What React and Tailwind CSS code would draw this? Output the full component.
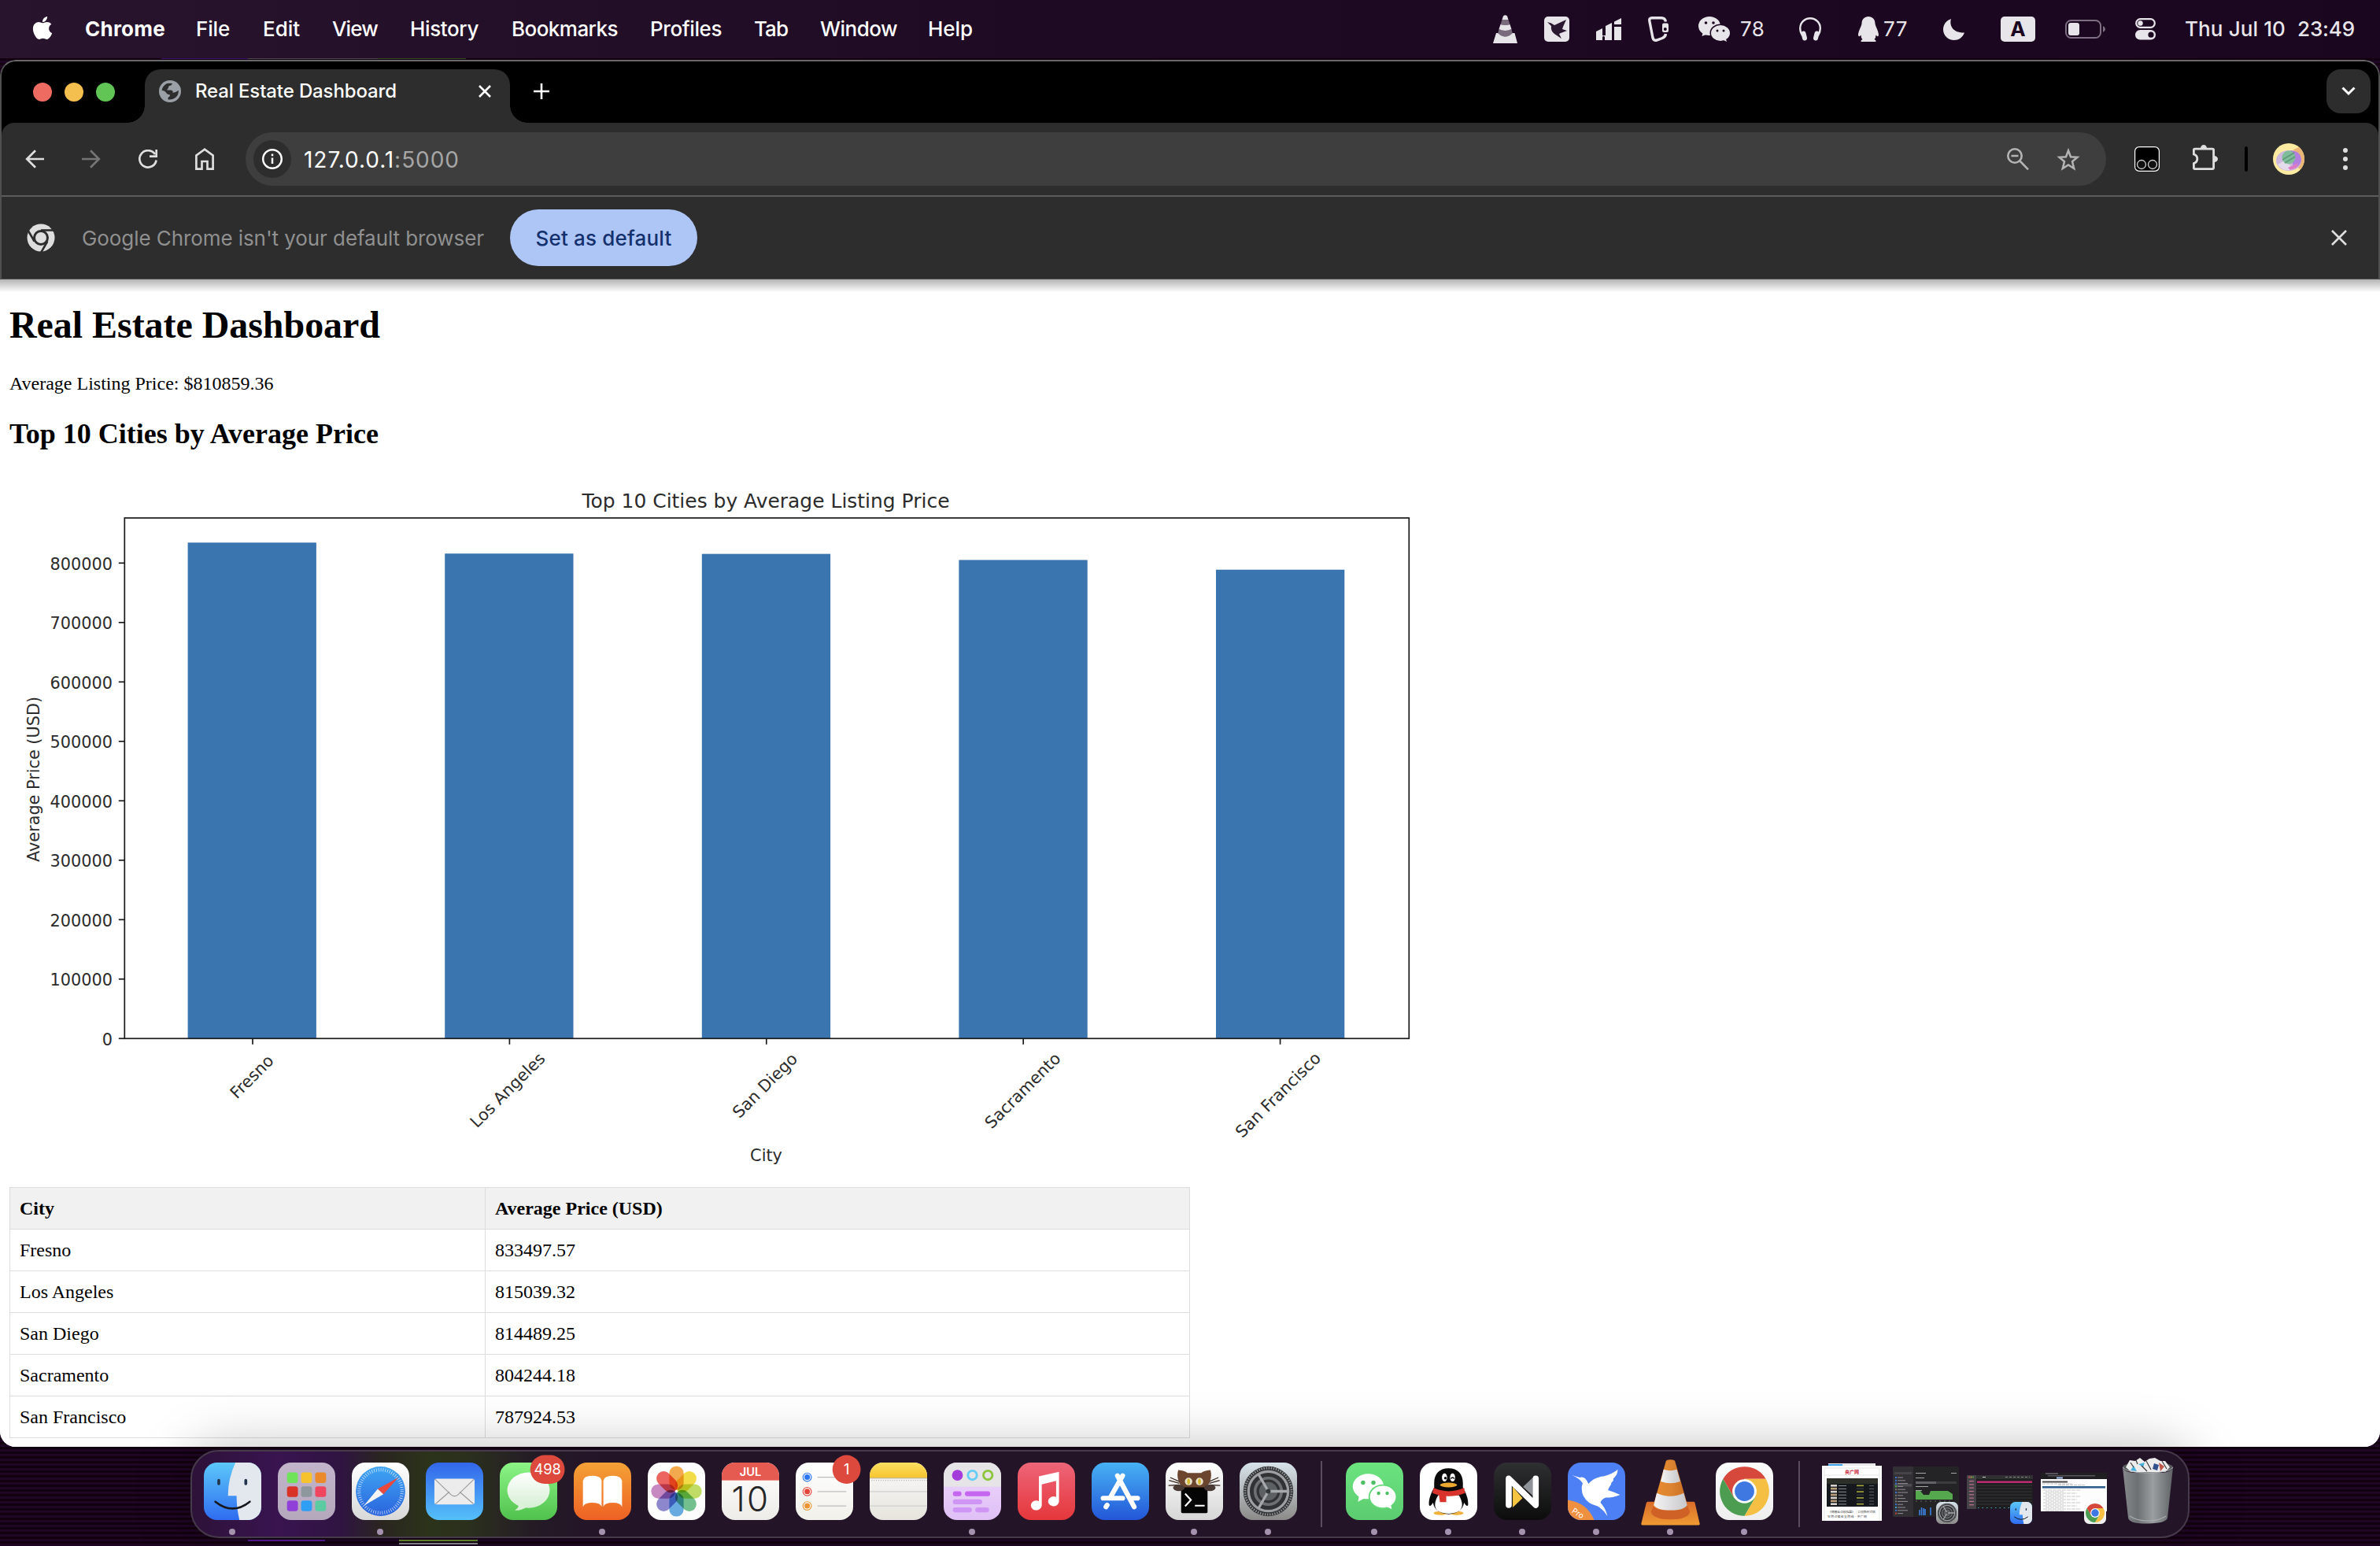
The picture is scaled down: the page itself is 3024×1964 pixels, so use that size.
import React, { useLayoutEffect, useRef } from "react";
import { FaApple } from "react-icons/fa";

/* One line of text whose tracking is adjusted so that it fills `w` pixels. */
function Fit({ w, className = "", children }) {
  const ref = useRef(null);
  useLayoutEffect(() => {
    const el = ref.current;
    el.style.letterSpacing = "0px";
    const n = el.textContent.length;
    const natural = el.getBoundingClientRect().width;
    el.style.letterSpacing = `${(w - natural) / n}px`;
  }, [w]);
  return (
    <span ref={ref} className={`inline-block shrink-0 whitespace-pre ${className}`}>
      {children}
    </span>
  );
}

/* ---------- menu bar ---------- */

const MENUS = [
  { label: "File", w: 43, ml: "ml-[39px]" },
  { label: "Edit", w: 47, ml: "ml-[42px]" },
  { label: "View", w: 58, ml: "ml-[41px]" },
  { label: "History", w: 87, ml: "ml-[41px]" },
  { label: "Bookmarks", w: 135, ml: "ml-[42px]" },
  { label: "Profiles", w: 91, ml: "ml-[41px]" },
  { label: "Tab", w: 43, ml: "ml-[41px]" },
  { label: "Window", w: 98, ml: "ml-[41px]" },
  { label: "Help", w: 57, ml: "ml-[39px]" },
];

function MenuBar() {
  return (
    <header className="flex h-[74px] w-full items-center bg-gradient-to-r from-[#28142d] via-[#1f0a24] via-45% to-[#1b0620] text-[26px] font-medium leading-none text-white">
      <FaApple className="mb-[4px] ml-[39px] h-[33px] w-[30px] shrink-0" />
      <Fit w={102} className="ml-[39px] font-bold">Chrome</Fit>
      {MENUS.map((m) => (
        <Fit key={m.label} w={m.w} className={m.ml}>{m.label}</Fit>
      ))}
      <div className="ml-auto flex h-full items-center pr-[32px] text-[#e8e5ea]">
        <svg width="31" height="36" viewBox="0 0 31 36" fill="currentColor">
          <path d="M13 1.5Q15.500-1 18 1.500L19.500 6H11.500Z" />
          <path d="M11.500 6H19.500L21.500 12Q15.500 14 9.500 12Z" opacity=".45" />
          <path d="M9.500 12Q15.500 14 21.500 12L23.500 18Q15.500 22 7.500 18Z" />
          <path d="M7.500 18Q15.500 22 23.500 18L25 24Q15.500 31 6 24Z" opacity=".45" />
          <path d="M4 23H6Q15.500 32 25 23H27.500L31 36H0Z" />
        </svg>
        <svg className="ml-[34px]" width="32" height="32" viewBox="0 0 32 32">
          <rect width="32" height="32" rx="5" fill="currentColor" />
          <path d="M4 7L9 8.500L13 11L28 4L24 13L23 16L29 18L21 21L19 22L22 28L13 22Q8 18 9 12Z" fill="#2a1730" />
        </svg>
        <svg className="ml-[34px]" width="32" height="28" viewBox="0 0 32 28" fill="currentColor">
          <path d="M0 17L8 13V22H12V10L20 6V28H11V24Q9.500 21 8 24V28H0Z" />
          <path d="M23 4.500L32 0V8H23ZM23 11H32V28H23Z" />
        </svg>
        <svg className="ml-[34px]" width="27" height="32" viewBox="0 0 27 32" fill="none" stroke="currentColor" strokeWidth="3.400">
          <path d="M22.500 6.500Q21.500 1.700 17 1.700H5Q1 1.700 1.900 6L6 27Q7 31 11 30L18 27.500Q22 26 22.500 22" />
          <rect x="18" y="8.500" width="8" height="11.500" rx="2" fill="currentColor" stroke="none" />
          <circle cx="21.800" cy="16" r="2" fill="#1b0620" stroke="none" />
        </svg>
        <svg className="ml-[37px]" width="40" height="32" viewBox="0 0 40 32">
          <g fill="currentColor">
            <ellipse cx="14" cy="12" rx="14" ry="12" />
            <path d="M6 19L4.500 25L12 22Z" />
            <ellipse cx="28" cy="21" rx="13.500" ry="11.500" fill="#1b0620" />
            <ellipse cx="28" cy="21" rx="12" ry="10" />
            <path d="M30 29L36 32L34.500 27Z" />
          </g>
          <g fill="#1b0620">
            <circle cx="9.500" cy="8" r="1.800" /><circle cx="19" cy="8" r="1.800" />
            <circle cx="24" cy="18" r="1.500" /><circle cx="32" cy="18" r="1.500" />
          </g>
        </svg>
        <Fit w={31} className="ml-[13px] font-normal">78</Fit>
        <svg className="ml-[44px]" width="28" height="30" viewBox="0 0 28 30" fill="none" stroke="currentColor">
          <path d="M4 23Q1.200 19 1.200 14A12.800 12.800 0 0 1 26.800 14Q26.800 19 24 23" strokeWidth="2.400" />
          <path d="M5.500 20.500L7 26.500M22.500 20.500L21 26.500" strokeWidth="6" strokeLinecap="round" />
        </svg>
        <svg className="ml-[47px]" width="26" height="32" viewBox="0 0 26 32" fill="currentColor">
          <path d="M13 0C18 0 21.500 3.500 21.500 9C22 13 26 18 26 24Q25 26.500 22.500 23.500Q22.500 27 20.500 29Q23 30 22.500 32H3.500Q3 30 5.500 29Q3.500 27 3.500 23.500Q1 26.500 0 24C0 18 4 13 4.500 9C4.500 3.500 8 0 13 0Z" />
        </svg>
        <Fit w={31} className="ml-[6px] font-normal">77</Fit>
        <svg className="ml-[45px]" width="27" height="27" viewBox="0 0 27 27" fill="currentColor">
          <path d="M10 0C7.500 8 12 18 27 17.500C24.500 24 19.500 27 14 27C6 27 0 21 0 13.500C0 7 4 2 10 0Z" />
        </svg>
        <span className="ml-[46px] flex h-[32px] w-[44px] items-center justify-center rounded-[5px] bg-[#e8e5ea] text-[26px] font-bold leading-none text-[#1b0620]">A</span>
        <svg className="ml-[38px]" width="51" height="24" viewBox="0 0 51 24">
          <rect x="1" y="1" width="44" height="22" rx="6.500" fill="none" stroke="#7d6f81" strokeWidth="2" />
          <rect x="4" y="4" width="14" height="16" rx="3" fill="currentColor" />
          <path d="M48 8Q51 9.500 51 12T48 16Z" fill="#7d6f81" />
        </svg>
        <svg className="ml-[38px]" width="26" height="28" viewBox="0 0 26 28">
          <rect x="1.200" y="1.200" width="23.600" height="10.600" rx="5.300" fill="none" stroke="currentColor" strokeWidth="2.200" />
          <circle cx="6.500" cy="6.500" r="3.200" fill="currentColor" />
          <rect x="0" y="15" width="26" height="12.500" rx="6.250" fill="currentColor" />
          <circle cx="20" cy="21.200" r="3.600" fill="#1b0620" />
        </svg>
        <Fit w={128} className="ml-[37px]">Thu Jul 10</Fit>
        <Fit w={73} className="ml-[15px]">23:49</Fit>
      </div>
    </header>
  );
}

/* ---------- browser chrome ---------- */

function TabStrip() {
  return (
    <div className="flex h-[78px] items-end">
      <div className="mb-[27px] ml-[40px] flex gap-4">
        <span className="size-6 rounded-full bg-[#ed6b60]" />
        <span className="size-6 rounded-full bg-[#f5bf4f]" />
        <span className="size-6 rounded-full bg-[#61c555]" />
      </div>
      <span className="ml-[16px] size-[22px] bg-[radial-gradient(circle_at_0_0,transparent_21.500px,#2d2d2d_22px)]" />
      <div className="h-[68px] w-[464px] rounded-t-[20px] bg-[#2d2d2d]">
        <div className="flex h-[56px] items-center pl-[18px] pr-[24px]">
          <svg width="28" height="28" viewBox="0 0 28 28">
            <circle cx="14" cy="14" r="14" fill="#9aa0a6" />
            <path d="M3.500 13Q4.500 7 10 4Q14.500 3.500 17 4Q16 7 13 7Q11.500 8.500 12 10Q10 10.500 10.500 12.500H15Q18.500 13 17.500 16Q23 14.500 24.700 12.500Q25.500 18 21 22Q17 25 12 24.500Q10.500 23.500 12 21.500Q14.500 20.500 14 18.500Q10 18 8.500 15Q6.500 12.500 3.500 13Z" fill="#2d2d2d" />
            <path d="M17 3.800Q23 6 24.600 12Q21.500 15.500 18 14.500Q18.500 12 15 10.500Q13.500 8 17 7.500Z" fill="#9aa0a6" />
          </svg>
          <Fit w={256} className="ml-[18px] text-[24px] font-medium leading-none text-white">Real Estate Dashboard</Fit>
          <svg className="ml-auto" width="16" height="16" viewBox="0 0 16 16" stroke="#fff" strokeWidth="2.600">
            <path d="M1 1L15 15M15 1L1 15" />
          </svg>
        </div>
      </div>
      <span className="size-[22px] bg-[radial-gradient(circle_at_100%_0,transparent_21.500px,#2d2d2d_22px)]" />
      <svg className="mb-[30px] ml-[8px]" width="20" height="20" viewBox="0 0 20 20" stroke="#fff" strokeWidth="2.600">
        <path d="M10 0V20M0 10H20" />
      </svg>
      <div className="mb-[12px] ml-auto mr-[10px] flex size-14 items-center justify-center rounded-[18px] bg-[#2d2d2d]">
        <svg width="18" height="12" viewBox="0 0 18 12" fill="none" stroke="#fff" strokeWidth="3">
          <path d="M1.500 1.500L9 9L16.500 1.500" />
        </svg>
      </div>
    </div>
  );
}

function Toolbar() {
  return (
    <div className="flex h-[92px] items-center rounded-t-[16px] bg-[#2d2d2d] pl-[30px] text-[#dedede]">
      <svg width="24" height="24" viewBox="0 0 24 24" fill="none" stroke="currentColor" strokeWidth="2.700">
        <path d="M24 12H2.500M13 1.200L2.200 12L13 22.800" />
      </svg>
      <svg className="ml-[48px] text-[#757575]" width="24" height="24" viewBox="0 0 24 24" fill="none" stroke="currentColor" strokeWidth="2.700">
        <path d="M0 12H21.500M11 1.200L21.800 12L11 22.800" />
      </svg>
      <svg className="ml-[48px]" width="24" height="24" viewBox="0 0 24 24" fill="none" stroke="currentColor" strokeWidth="2.700">
        <path d="M22.600 13.500A10.700 10.700 0 1 1 21 6" />
        <path d="M22.700 0V8.700H14" />
      </svg>
      <svg className="ml-[48px]" width="24" height="28" viewBox="0 0 24 28" fill="none" stroke="currentColor" strokeWidth="2.700">
        <path d="M1.400 26.600V9.500L12 1.700L22.600 9.500V26.600H15.500V17H8.500V26.600Z" />
      </svg>
      <div className="ml-[40px] flex h-[68px] w-[2364px] shrink-0 items-center rounded-full bg-[#3e3e3e] pl-[10px] pr-[33px]">
        <span className="flex size-12 items-center justify-center rounded-full bg-[#2d2d2d]">
          <svg width="26" height="26" viewBox="0 0 26 26" fill="none" stroke="#fff">
            <circle cx="13" cy="13" r="11.800" strokeWidth="2.400" />
            <path d="M13 11.500V19M13 6.500V9.200" strokeWidth="2.500" />
          </svg>
        </span>
        <Fit w={198} className="ml-[16px] mt-[1px] text-[28px] leading-none text-white">
          127.0.0.1<span className="text-[#a6a6a6]">:5000</span>
        </Fit>
        <svg className="ml-auto text-[#b4b4b4]" width="28" height="28" viewBox="0 0 28 28" fill="none" stroke="currentColor" strokeWidth="2.600">
          <circle cx="10" cy="10" r="8.700" />
          <path d="M5.500 10H14.500M16 16L27 27.300" />
        </svg>
        <svg className="ml-[35px] text-[#b4b4b4]" width="30" height="29" viewBox="0 0 30 29" fill="none" stroke="currentColor" strokeWidth="2.500">
          <path d="M15 3.300L18 11.200L26.500 11.800L20 17.300L22.200 26L15 21.400L7.800 26L10 17.300L3.500 11.800L12 11.200Z" />
        </svg>
      </div>
      <svg className="ml-[36px] shrink-0" width="32" height="32" viewBox="0 0 32 32">
        <rect x=".6" y=".6" width="30.800" height="30.800" rx="5.500" fill="#000" stroke="#fff" strokeWidth="1.200" />
        <circle cx="9" cy="23" r="5.500" fill="#111" stroke="#d0d0d0" strokeWidth="1.300" />
        <circle cx="23" cy="23" r="5.500" fill="#111" stroke="#d0d0d0" strokeWidth="1.300" />
      </svg>
      <svg className="mb-[4px] ml-[42px] shrink-0" width="32" height="32" viewBox="0 0 32 32" fill="none" stroke="currentColor" strokeWidth="2.800">
        <path d="M1.400 12V6.500Q1.400 5.200 2.700 5.200H25Q26.600 5.200 26.600 6.500V29Q26.600 30.600 25 30.600H2.700Q1.400 30.600 1.400 29V23.500Q5.800 22 5.800 17.700T1.400 12Z" />
        <path d="M10 4.500A4 4.500 0 0 1 18 4.500ZM27.500 14A4.500 4 0 0 1 27.500 22Z" fill="currentColor" stroke="none" />
      </svg>
      <span className="ml-[34px] h-[32px] w-[4px] shrink-0 rounded-full bg-black" />
      <svg className="ml-[32px] shrink-0" width="40" height="40" viewBox="0 0 40 40">
        <clipPath id="avatar"><circle cx="20" cy="20" r="20" /></clipPath>
        <g clipPath="url(#avatar)">
          <rect width="40" height="40" fill="#fbeaa0" />
          <path d="M26 8L40 2V36L30 30Z" fill="#eab676" />
          <ellipse cx="20" cy="22" rx="16" ry="13" fill="#cdb8df" />
          <path d="M22 9Q36 10 36 22Q34 30 26 32Z" fill="#b07fe0" />
          <path d="M6 27L18 20L24 34Q12 36 6 27Z" fill="#e4dcea" />
          <path d="M19 31L32 25L30 31L22 34Z" fill="#dd7cc4" />
          <circle cx="20" cy="18" r="8.500" fill="#7fbd9b" />
          <path d="M12 21L27 12M15 25L28 17" stroke="#5e9a7a" strokeWidth="1.500" />
        </g>
      </svg>
      <svg className="ml-[49px] shrink-0" width="6" height="28" viewBox="0 0 6 28" fill="currentColor">
        <circle cx="3" cy="3" r="3" /><circle cx="3" cy="14" r="3" /><circle cx="3" cy="25" r="3" />
      </svg>
    </div>
  );
}

function InfoBar() {
  return (
    <div className="flex h-[106px] items-center border-t-2 border-[#5c5c5c] bg-[#2d2d2d] pl-[32px]">
      <svg width="36" height="36" viewBox="-18 -18 36 36">
        <circle r="17.500" fill="#dedede" />
        {[0, 120, 240].map((a) => (
          <path key={a} d="M0 -9.500H17" transform={`rotate(${a})`} stroke="#2d2d2d" strokeWidth="2.600" />
        ))}
        <circle r="8.500" fill="#dedede" stroke="#2d2d2d" strokeWidth="3" />
      </svg>
      <Fit w={511} className="ml-[34px] mt-[2px] text-[26px] leading-none text-[#909090]">Google Chrome isn't your default browser</Fit>
      <button className="ml-[33px] flex h-[72px] w-[238px] items-center justify-center rounded-full bg-[#aec6f6] pt-[2px] text-[26px] font-medium leading-none text-[#14306d]">
        <Fit w={173}>Set as default</Fit>
      </button>
      <svg className="ml-auto mr-[40px]" width="20" height="20" viewBox="0 0 20 20" stroke="#dedede" strokeWidth="2.600">
        <path d="M1 1L19 19M19 1L1 19" />
      </svg>
    </div>
  );
}

/* ---------- page ---------- */

const CITIES = [
  { name: "Fresno", price: "833497.57", cx: 320, cy: 1368 },
  { name: "Los Angeles", price: "815039.32", cx: 645, cy: 1385 },
  { name: "San Diego", price: "814489.25", cx: 972, cy: 1379 },
  { name: "Sacramento", price: "804244.18", cx: 1299.500, cy: 1385.500 },
  { name: "San Francisco", price: "787924.53", cx: 1624, cy: 1391 },
];
const BASE_Y = 1319.3;
const PER_100K = 75.5;

function PriceChart() {
  return (
    <svg
      className="mt-[28px] block"
      width="1800"
      height="900"
      viewBox="12 600 1800 900"
      fontFamily="'DejaVu Sans', sans-serif"
      fill="#2b2b2b"
    >
      <text x="973" y="645" fontSize="25" textAnchor="middle" textLength="467" lengthAdjust="spacingAndGlyphs">Top 10 Cities by Average Listing Price</text>
      {CITIES.map((c, i) => {
        const h = (Number(c.price) / 100000) * PER_100K + 0.7;
        return <rect key={c.name} x={238.600 + i * 326.600} y={BASE_Y - h} width="163.300" height={h} fill="#3b75af" />;
      })}
      <g stroke="#1a1a1a" strokeWidth="1.700" fill="none">
        <rect x="158.300" y="658" width="1632" height={BASE_Y - 658} />
        {CITIES.map((c, i) => (
          <path key={c.name} d={`M${321 + i * 326.400} ${BASE_Y}v7.500`} />
        ))}
        {[0, 1, 2, 3, 4, 5, 6, 7, 8].map((n) => (
          <path key={n} d={`M158.300 ${BASE_Y - n * PER_100K}h-7.500`} />
        ))}
      </g>
      <g fontSize="20.800">
        {[0, 1, 2, 3, 4, 5, 6, 7, 8].map((n) => (
          <text key={n} x="143" y={BASE_Y - n * PER_100K + 8.300} textAnchor="end">{n * 100000}</text>
        ))}
        {CITIES.map((c) => (
          <text key={c.name} textAnchor="middle" transform={`translate(${c.cx} ${c.cy}) rotate(-45)`} y="7">{c.name}</text>
        ))}
        <text x="973.500" y="1475" textAnchor="middle">City</text>
        <text transform="translate(50 990) rotate(-90)" textAnchor="middle">Average Price (USD)</text>
      </g>
    </svg>
  );
}

function Page() {
  return (
    <main className="h-[1483px] overflow-hidden bg-white bg-gradient-to-b from-[#b4b4b4] via-white via-[1.100%] to-white px-[12px] pt-[31px] font-['Liberation_Serif',serif] text-[24px] text-black">
      <h1 className="text-[48px] font-bold leading-[54px] tracking-[-0.05px]">Real Estate Dashboard</h1>
      <p className="mt-[33px] leading-[28px]">Average Listing Price: $810859.36</p>
      <h2 className="mt-[29px] text-[36px] font-bold leading-[42px]">Top 10 Cities by Average Price</h2>
      <PriceChart />
      <table className="mt-[8px] w-[1500px] table-fixed border-collapse text-left leading-[28px]">
        <thead>
          <tr className="h-[53px] bg-[#f1f1f1]">
            <th className="w-[604px] border border-[#ddd] px-[12px] py-0">City</th>
            <th className="border border-[#ddd] px-[12px] py-0">Average Price (USD)</th>
          </tr>
        </thead>
        <tbody>
          {CITIES.map((c) => (
            <tr key={c.name} className="h-[53px]">
              <td className="border border-[#ddd] px-[12px] py-0">{c.name}</td>
              <td className="border border-[#ddd] px-[12px] py-0">{c.price}</td>
            </tr>
          ))}
        </tbody>
      </table>
    </main>
  );
}

/* ---------- dock icons, drawn on a 100 x 100 grid ---------- */

function Grad({ id, from, to, mid }) {
  return (
    <linearGradient id={id} x1="0" y1="0" x2="0" y2="1">
      <stop offset="0" stopColor={from} />
      {mid && <stop offset=".5" stopColor={mid} />}
      <stop offset="1" stopColor={to} />
    </linearGradient>
  );
}

function Tile({ id, from, to, children }) {
  return (
    <>
      <defs>
        <Grad id={id} from={from} to={to} />
        <clipPath id={`${id}-clip`}><rect width="100" height="100" rx="23" /></clipPath>
      </defs>
      <g clipPath={`url(#${id}-clip)`}>
        <rect width="100" height="100" fill={`url(#${id})`} />
        {children}
      </g>
    </>
  );
}

function Finder({ id = "finder" }) {
  return (
    <Tile id={id} from="#5cc8fa" to="#2f6cf0">
      <path d="M55 0Q42 28 42 58H57Q57 80 62 100H100V0Z" fill="#e3e7ee" />
      <path d="M26 31V37M73 31V37" stroke="#23344d" strokeWidth="5" strokeLinecap="round" />
      <path d="M20 68Q50 92 80 68" fill="none" stroke="#16181c" strokeWidth="3.500" strokeLinecap="round" />
    </Tile>
  );
}

function Launchpad() {
  const colors = ["#6fe35a", "#f6c32f", "#ea8a2b", "#d93327", "#8e979d", "#f0455f", "#9040d8", "#2f9ff5", "#5ccba2"];
  return (
    <Tile id="launchpad" from="#c2b4ca" to="#b5a8bd">
      {colors.map((c, i) => (
        <rect key={c} x={16 + (i % 3) * 24.500} y={17 + Math.floor(i / 3) * 24.500} width="19" height="18.500" rx="4.500" fill={c} />
      ))}
    </Tile>
  );
}

function Safari() {
  return (
    <Tile id="safari" from="#ffffff" to="#d8d8d8">
      <defs><Grad id="safari-face" from="#3fa6f3" to="#2a63dd" /></defs>
      <circle cx="50" cy="50" r="43" fill="url(#safari-face)" />
      <circle cx="50" cy="50" r="37.500" fill="none" stroke="#fff" strokeWidth="6" strokeDasharray="1 2.927" opacity=".8" />
      <path d="M81 26L45 46L55 55Z" fill="#e9493d" />
      <path d="M21 75L45 46L55 55Z" fill="#f4f4f4" />
    </Tile>
  );
}

function Mail() {
  return (
    <Tile id="mail" from="#3266ea" to="#55c0fa">
      <rect x="15" y="28" width="70" height="45" rx="4" fill="#ececec" />
      <path d="M17 72L41 51M83 72L59 51M16 29L44 56Q50 61 56 56L84 29" fill="none" stroke="#9b9b9b" strokeWidth="1.600" />
    </Tile>
  );
}

function Badge({ text, x, w }) {
  return (
    <g>
      <rect x={x} y="-13" width={w} height="50" rx="25" fill="#dd4a3d" />
      <text x={x + w / 2} y="21" fontSize="25" textAnchor="middle" fill="#fff" fontFamily="Inter, sans-serif">{text}</text>
    </g>
  );
}

function Messages() {
  return (
    <>
      <Tile id="messages" from="#8cf586" to="#50c14d">
        <defs><Grad id="bubble" from="#ffffff" to="#d5efd3" /></defs>
        <ellipse cx="50" cy="48" rx="37" ry="31" fill="url(#bubble)" />
        <path d="M33 71Q34 79 26 83Q38 84 47 77Z" fill="#dcf1da" />
      </Tile>
      <Badge text="498" x={53} w={60} />
    </>
  );
}

function Books() {
  return (
    <Tile id="books" from="#f4a236" to="#ee6124">
      <path d="M16 77V32Q17 23 32 23Q48 23 48.500 32V77Q46 70 32 70Q19 70 16 77ZM51.500 77V32Q52 23 68 23Q83 23 84 32V77Q81 70 68 70Q54 70 51.500 77Z" fill="#fff" />
    </Tile>
  );
}

function Photos() {
  const petals = ["#f39b2d", "#f1d928", "#b7d84b", "#5bb77c", "#4f9fe0", "#7b74c9", "#c073b8", "#ea4a44"];
  return (
    <Tile id="photos" from="#ffffff" to="#fbfbfb">
      {petals.map((c, i) => (
        <rect key={c} x="37.500" y="6" width="25" height="42" rx="12.500" fill={c} opacity=".85" transform={`rotate(${i * 45} 50 50)`} className="mix-blend-multiply" />
      ))}
      <circle cx="50" cy="50" r="2" fill="#fff" />
    </Tile>
  );
}

function Calendar() {
  return (
    <Tile id="calendar" from="#ffffff" to="#eeece8">
      <rect width="100" height="31" fill="#e55a51" />
      <text x="50" y="23.500" fontSize="20" fontWeight="600" textAnchor="middle" fill="#fff" fontFamily="Inter, sans-serif">JUL</text>
      <text x="49" y="85" fontSize="60" fontWeight="300" textAnchor="middle" textLength="64" fill="#262626" fontFamily="Inter, sans-serif">10</text>
    </Tile>
  );
}

function Reminders() {
  return (
    <>
      <Tile id="reminders" from="#ffffff" to="#f1f0ea">
        {["#2b74f2", "#e5463a", "#ef9434"].map((c, i) => (
          <g key={c}>
            <circle cx="20" cy={25.500 + i * 25} r="7.300" fill="#fff" stroke={c} strokeWidth="1.600" />
            <circle cx="20" cy={25.500 + i * 25} r="4.800" fill={c} />
            <path d={`M38 ${25.500 + i * 25}H88`} stroke="#bdbdbd" strokeWidth="1.500" />
          </g>
        ))}
      </Tile>
      <Badge text="1" x={64} w={49} />
    </>
  );
}

function Notes() {
  return (
    <Tile id="notes" from="#fafafa" to="#e6e4dc">
      <defs><Grad id="notes-top" from="#fbe062" to="#f7c52f" /></defs>
      <rect width="100" height="26" fill="url(#notes-top)" />
      <path d="M0 27H100" stroke="#b9a068" strokeWidth="1.500" />
      <path d="M3 31H100" stroke="#b8b8b8" strokeWidth="2" strokeDasharray="1.500 2.500" />
      <path d="M0 50.500H100M0 75.500H100" stroke="#cfcfcf" strokeWidth="1.500" />
    </Tile>
  );
}

function Widgets() {
  return (
    <Tile id="widgets" from="#eed8fb" to="#dfc0f6">
      <rect width="100" height="42" fill="#e6e4e6" />
      <circle cx="24" cy="22" r="9.500" fill="#a43cdb" />
      <circle cx="50" cy="22" r="7.800" fill="none" stroke="#66cdf5" strokeWidth="4" />
      <circle cx="77" cy="22" r="7.800" fill="none" stroke="#8ec63f" strokeWidth="4" />
      <rect x="16" y="50" width="15" height="8.500" rx="4" fill="#c566f0" />
      <rect x="37" y="50" width="44" height="8.500" rx="4" fill="#c566f0" />
      <g fill="#cf95f4">
        <rect x="16" y="64" width="51" height="8.500" rx="4" />
        <rect x="16" y="78" width="33" height="8.500" rx="4" />
        <rect x="55" y="78" width="24" height="8.500" rx="4" />
      </g>
    </Tile>
  );
}

function Music() {
  return (
    <Tile id="music" from="#ee6579" to="#e5373b">
      <path d="M37 24L72 16V68A9.500 8.500 0 1 1 67 60V32L42 38V75A9.500 8.500 0 1 1 37 67Z" fill="#fff" />
    </Tile>
  );
}

function AppStore() {
  return (
    <Tile id="appstore" from="#47b2f4" to="#2356d8">
      <g stroke="#fff" strokeWidth="8.500" strokeLinecap="round">
        <path d="M54 23L33 60M45 23L74 77M20 62H54M67 62H80M27 74L25 77" />
      </g>
    </Tile>
  );
}

function CatTerminal() {
  return (
    <Tile id="cat" from="#ffffff" to="#d6d6d6">
      <path d="M22 13Q33 14 38 18H62Q67 14 78 13Q81 24 77 33Q74 44 60 46H40Q26 44 23 33Q19 24 22 13Z" fill="#6b452d" />
      <ellipse cx="40" cy="33" rx="6.500" ry="6.500" fill="#e6dfc9" /><ellipse cx="59" cy="33" rx="6.500" ry="6.500" fill="#e6dfc9" />
      <ellipse cx="40" cy="33" rx="2.500" ry="5" fill="#d7b92c" /><ellipse cx="59" cy="33" rx="2.500" ry="5" fill="#d7b92c" />
      <rect x="27" y="43" width="46" height="45" rx="2" fill="#050505" />
      <path d="M6 31L24 36M5 40L24 39M94 31L76 36M95 40L76 39M8 26L24 33M92 26L76 33" stroke="#3a2a22" strokeWidth="1.800" />
      <ellipse cx="23" cy="44" rx="10" ry="5.500" fill="#4a3a36" /><ellipse cx="77" cy="44" rx="10" ry="5.500" fill="#4a3a36" />
      <path d="M34 54L44 65L34 76M51 75H68" fill="none" stroke="#fff" strokeWidth="3" />
    </Tile>
  );
}

function Settings({ id = "settings" }) {
  return (
    <Tile id={id} from="#d7e3ea" to="#8b8a88">
      <circle cx="50" cy="50" r="43.500" fill="#303234" />
      <circle cx="50" cy="50" r="40.500" fill="none" stroke="#8f9395" strokeWidth="4" strokeDasharray="2 2.240" />
      <circle cx="50" cy="50" r="34.500" fill="none" stroke="#9da0a2" strokeWidth="4.500" />
      <circle cx="50" cy="50" r="23" fill="none" stroke="#6d7072" strokeWidth="5" />
      <circle cx="50" cy="50" r="16" fill="#5d6062" />
      {[0, 120, 240].map((a) => (
        <path key={a} d="M50 50H84" stroke="#a6a9ab" strokeWidth="4.500" transform={`rotate(${a} 50 50)`} />
      ))}
      <circle cx="50" cy="50" r="4" fill="#34373a" />
    </Tile>
  );
}

function WeChat() {
  return (
    <Tile id="wechat" from="#6be47f" to="#5ccb70">
      <ellipse cx="39" cy="41.500" rx="27" ry="22" fill="#fff" />
      <path d="M23 58L21 68L33 62Z" fill="#fff" />
      <ellipse cx="64.500" cy="59.500" rx="25" ry="21.500" fill="#63d777" />
      <ellipse cx="64.500" cy="59.500" rx="22.500" ry="19" fill="#fff" />
      <path d="M70 76L80 81L78 72Z" fill="#fff" />
      <g fill="#4fbf66">
        <circle cx="30" cy="35" r="3.700" /><circle cx="48" cy="35" r="3.700" />
        <circle cx="57" cy="53.500" r="3" /><circle cx="72" cy="53.500" r="3" />
      </g>
    </Tile>
  );
}

function QQ() {
  return (
    <Tile id="qq" from="#ffffff" to="#ffffff">
      <ellipse cx="36" cy="88" rx="12" ry="3.500" fill="#efb23c" /><ellipse cx="64" cy="88" rx="12" ry="3.500" fill="#efb23c" />
      <path d="M50 10C66 10 75 20 75 36V44C80 52 85 64 84 74Q82 78 77 70Q74 88 50 90Q26 88 23 70Q18 78 16 74C15 64 20 52 25 44V36C25 20 34 10 50 10Z" fill="#0a0a0a" />
      <path d="M32 57H68Q78 74 70 83Q62 89 50 89T30 83Q22 74 32 57Z" fill="#fff" />
      <ellipse cx="43" cy="26" rx="4.500" ry="7" fill="#fff" /><ellipse cx="57" cy="26" rx="4.500" ry="7" fill="#fff" />
      <circle cx="44.500" cy="27" r="2.300" fill="#0a0a0a" />
      <path d="M54 28Q57 24 60 28" fill="none" stroke="#0a0a0a" strokeWidth="2" />
      <ellipse cx="50" cy="39" rx="15" ry="4" fill="#eda92f" />
      <path d="M24 44Q50 56 77 44L79 53Q50 64 22 53Z" fill="#d9342b" />
      <path d="M33 54H46V69H35Z" fill="#d9342b" />
    </Tile>
  );
}

function Neat() {
  return (
    <Tile id="neat" from="#2f3032" to="#0c0c0c">
      <path d="M33 42L50 62L33 78Z" fill="#f5c542" />
      <path d="M68 26V58L51 42Z" fill="#8f9297" />
      <path d="M26 74V28L73 74V28" fill="none" stroke="#fff" strokeWidth="10.500" strokeLinecap="round" strokeLinejoin="round" />
    </Tile>
  );
}

function Bird() {
  return (
    <Tile id="bird" from="#4e80f5" to="#4e80f5">
      <path d="M7 22L21 26Q30 23 36 37Q46 25 62 24Q78 20 87 12Q87 22 79 28Q81 31 76 35Q76 39 72 43L70 48Q82 52 91 56Q80 61 66 61Q58 64 57 70Q66 80 69 93Q62 82 52 76Q34 72 27 58Q22 46 26 36Q20 27 7 22Z" fill="#fff" />
      <path d="M0 65Q34 70 46 100H0Z" fill="#ee9040" />
      <text x="18" y="93" fontSize="13.500" textAnchor="middle" fill="#fff" fontFamily="Inter, sans-serif" transform="rotate(33 18 88)">Pro</text>
    </Tile>
  );
}

function VLC() {
  return (
    <>
      <defs>
        <linearGradient id="cone" x1="0" x2="1"><stop offset="0" stopColor="#e98c2f" /><stop offset=".5" stopColor="#dc8430" /><stop offset="1" stopColor="#c96d24" /></linearGradient>
        <linearGradient id="band" x1="0" x2="1"><stop offset="0" stopColor="#f3f3f3" /><stop offset="1" stopColor="#c8c8cc" /></linearGradient>
        <Grad id="cone-base" from="#d86c2a" to="#f09b33" />
      </defs>
      <path d="M10 68H90Q92 68 92.500 70L101 107Q101 109 99 109H1Q-1 109 -1 107L8 70Z" fill="url(#cone-base)" />
      <path d="M22 72H78L84 86Q80 99 50 99T16 86Z" fill="#cf6127" />
      <path d="M42 -2Q43 -5 50 -5T58 -2L80 75Q76 83 50 83T20 75Z" fill="url(#cone)" />
      <path d="M38 12Q50 16 61 12L67 33Q50 39 33 33Z" fill="url(#band)" />
      <path d="M26 53Q50 64 73 53L79 74Q74 83 50 83T21 74Z" fill="url(#band)" />
    </>
  );
}

function Chrome({ id = "chrome" }) {
  const sector = "M-37.200 -21.500A43 43 0 0 1 37.200 -21.500H0L-18.600 10.700Z";
  return (
    <Tile id={id} from="#fbfbfb" to="#eeeeee">
      <g transform="translate(50 50)">
        <path d={sector} fill="#d7483c" />
        <path d={sector} fill="#f4bf42" transform="rotate(120)" />
        <path d={sector} fill="#4c9d52" transform="rotate(240)" />
        <circle r="21" fill="#fff" />
        <circle r="17" fill="#3f78e0" />
      </g>
    </Tile>
  );
}

/* Minimised windows and the bin, drawn in dock slot pixels. */

function MiniBadge({ children }) {
  return <svg x="61" y="66" width="28" height="28" viewBox="0 0 100 100">{children}</svg>;
}

function MiniArticle() {
  return (
    <>
      <rect x="18" y="17" width="60" height="6" fill="#e8e8e8" /><rect x="18" y="18" width="18" height="2" fill="#3aa0e8" />
      <rect x="10" y="20" width="76" height="70" fill="#fff" />
      <path d="M13 90V23H83V90M13 32H83" fill="none" stroke="#ddd" strokeWidth=".7" />
      <text x="48" y="29.500" fontSize="6" fontWeight="700" textAnchor="middle" fill="#c8283c" fontFamily="'Noto Sans CJK SC', sans-serif">央广网</text>
      <rect x="16" y="36" width="65" height="36" fill="#15191d" />
      <rect x="16" y="36" width="65" height="7" fill="#2d3029" />
      {[0, 1, 2, 3, 4, 5, 6].map((i) => (
        <g key={i}>
          <rect x="21" y={44 + i * 3.900} width="8" height="2.600" fill={i % 2 ? "#b9a07a" : "#d8d4cc"} />
          <rect x="31" y={45 + i * 3.900} width="10" height="1" fill="#8b9094" />
          <rect x="54" y={44.500 + i * 3.900} width="9" height="1.600" fill={i % 2 ? "#2e3438" : "#a4a63a"} />
          <rect x="70" y={45 + i * 3.900} width="6" height="1" fill="#5b6064" />
        </g>
      ))}
      <g fontSize="3.900" fill="#444" fontFamily="'Noto Sans CJK SC', sans-serif">
        <text x="18" y="79.500" textLength="60">《情感反诈模拟器》｜以创新形式筑</text>
        <text x="17" y="85.500" textLength="50">牢防诈骗安全防线 - 央广网</text>
      </g>
    </>
  );
}

function MiniBattery() {
  const side = ["#3a76d8", "#3a76d8", "#3a76d8", "#4fae4c", "#777", "#3a76d8", "#777", "#777", "#777", "#3a76d8", "#4aa0c8", "#3a76d8", "#c0453c"];
  return (
    <>
      <rect x="6" y="21" width="84" height="64" rx="2" fill="#242426" />
      <path d="M6 21H32V85H8Q6 85 6 83Z" fill="#323034" />
      <rect x="8" y="28" width="22" height="3" fill="#454448" /><rect x="8" y="43" width="22" height="3.500" fill="#4d4c50" />
      {side.map((c, i) => (
        <g key={i}><rect x="9" y={34 + i * 3.800} width="2" height="2" fill={c} /><rect x="12" y={34.500 + i * 3.800} width={7 + (i % 3) * 3} height="1" fill="#918f94" /></g>
      ))}
      <g fill="#a5a5a8"><rect x="35" y="29" width="13" height="1" /><rect x="35" y="35" width="11" height="1" /><rect x="80" y="29" width="7" height="1" /><rect x="35" y="46" width="16" height="1" /><rect x="35" y="51" width="8" height="1" /></g>
      <rect x="35" y="40" width="52" height="3" fill="#3c3c3f" /><rect x="35" y="40" width="26" height="3" fill="#636367" />
      <path d="M35 52H41L45 57H52L54 52H76L82 56V63H35Z" fill="#56a84f" />
      <path d="M35 65H82" stroke="#777" strokeWidth=".8" strokeDasharray="2 4" />
      <path d="M40 83V76M42.500 83V73M45 83V74M47 83V75M54 83V73" stroke="#3b7fe0" strokeWidth="1.600" />
      <MiniBadge><Settings id="settings-mini" /></MiniBadge>
    </>
  );
}

function MiniFinder() {
  return (
    <>
      <rect x="6" y="32" width="84" height="43" rx="2" fill="#1e1e20" />
      <path d="M6 32H18V75H6Z" fill="#464348" />
      <rect x="18" y="32" width="72" height="5" fill="#303033" />
      <circle cx="9" cy="34.500" r=".9" fill="#e05a50" /><circle cx="11.500" cy="34.500" r=".9" fill="#d9a63f" /><circle cx="14" cy="34.500" r=".9" fill="#52b04a" />
      <rect x="26" y="34" width="4" height="1" fill="#ccc" /><path d="M55 34.500H86" stroke="#888" strokeWidth="1.200" strokeDasharray="3 2" />
      <rect x="19" y="39.500" width="70" height="2.400" fill="#c22c74" />
      {[0, 1, 2, 3, 4, 5, 6].map((i) => <rect key={i} x="19" y={44 + i * 4} width="70" height="2" fill="#29292b" />)}
      {[0, 1, 2, 3, 4, 5, 6, 7].map((i) => <rect key={i} x="9" y={39 + i * 4.300} width="6" height="1.200" fill="#b8708c" />)}
      <path d="M20 73.500H60" stroke="#4aa0c8" strokeWidth="1" strokeDasharray="1.500 4" />
      <MiniBadge><Finder id="finder-mini" /></MiniBadge>
    </>
  );
}

function MiniDocs() {
  return (
    <>
      <rect x="6" y="29" width="84" height="49" fill="#fdfdfd" />
      <rect x="6" y="29" width="84" height="8" fill="#1f1f21" /><rect x="12" y="29" width="16" height="2" fill="#55555a" />
      <rect x="15" y="32" width="60" height="1.500" fill="#55555a" /><rect x="26" y="34.500" width="8" height="2" fill="#aec6f6" />
      <rect x="8" y="39.500" width="32" height="2" fill="#4a4a4a" />
      <path d="M8 43H46M28 44.500H62" stroke="#b3b3b3" strokeWidth=".8" strokeDasharray="4 1" />
      <rect x="8" y="46" width="80" height="2.600" fill="#2f5f8c" />
      {[0, 1, 2, 3, 4, 5, 6].map((i) => (
        <path key={i} d={`M9 ${51 + i * 4}H${56 - (i % 2) * 4}M12 ${53 + i * 4}H36`} stroke="#bdbdbd" strokeWidth=".8" strokeDasharray="5 1" />
      ))}
      <MiniBadge><Chrome id="chrome-mini" /></MiniBadge>
    </>
  );
}

function Trash() {
  return (
    <>
      <defs>
        <linearGradient id="bin" x1="0" x2="1"><stop offset="0" stopColor="#85898c" /><stop offset=".3" stopColor="#6d7174" /><stop offset=".6" stopColor="#9a9ea0" /><stop offset="1" stopColor="#606467" /></linearGradient>
      </defs>
      <ellipse cx="48" cy="22" rx="32" ry="7" fill="#54585b" />
      <path d="M20 22L25 13L32 14L38 10L44 15L50 11L57 10L64 14L70 14L76 22L70 28H27Z" fill="#ececec" />
      <path d="M36 18L44 16L42 22ZM30 20L34 27L26 26Z" fill="#46b1dc" />
      <path d="M56 17L62 19L60 26L54 24Z" fill="#31508c" /><path d="M62 16L69 21L64 27Z" fill="#c0574b" />
      <path d="M26 16L30 22M46 14L52 25M66 14L72 24M40 20L47 27M33 13L35 18" stroke="#3a3a3a" strokeWidth="1.200" />
      <path d="M16 22Q18 28 30 29H66Q78 28 80 22L73 86Q72 93 48 93.500T23 86Z" fill="url(#bin)" />
      <path d="M16 22Q20 29 48 29T80 22" fill="none" stroke="#b3b7b9" strokeWidth="1" />
      <path d="M25 84Q34 90 48 90T71 84" fill="none" stroke="#a9adaf" strokeWidth="1.200" />
    </>
  );
}

const PINNED = [
  [Finder, true], [Launchpad, false], [Safari, true], [Mail, false], [Messages, false],
  [Books, true], [Photos, false], [Calendar, false], [Reminders, false], [Notes, false],
  [Widgets, true], [Music, false], [AppStore, false], [CatTerminal, true], [Settings, true],
];
const OPEN = [[WeChat, true], [QQ, true], [Neat, true], [Bird, true], [VLC, true], [Chrome, true]];
const SHELF = [MiniArticle, MiniBattery, MiniFinder, MiniDocs, Trash];

function AppSlot({ Icon, running }) {
  return (
    <div className="flex w-[94px] shrink-0 flex-col items-center pt-[14px]">
      <svg className="overflow-visible" width="73" height="73" viewBox="0 0 100 100"><Icon /></svg>
      {running && <span className="mt-[11px] size-2 rounded-full bg-[#a592ae]" />}
    </div>
  );
}

function DockDivider({ className }) {
  return <span className={`mt-[12px] h-[84px] w-[2px] shrink-0 bg-[#5b4d60] ${className}`} />;
}

function Dock() {
  return (
    <nav className="relative ml-[242px] mt-[4px] flex h-[112px] w-[2540px] rounded-[36px] border-2 border-[#463a4b] bg-[#241428] bg-[linear-gradient(90deg,#2d1238_0,#391450_110px,#2f1441_190px,#2a2520_240px,#2b331a_300px,#2b301d_350px,#241a26_440px,#241428_520px)] pl-[4px] shadow-[0_0_70px_rgba(0,0,0,0.28)]">
      {PINNED.map(([Icon, running], i) => <AppSlot key={i} Icon={Icon} running={running} />)}
      <DockDivider className="mx-[19.500px]" />
      {OPEN.map(([Icon, running], i) => <AppSlot key={i} Icon={Icon} running={running} />)}
      <DockDivider className="ml-[22px] mr-[18px]" />
      {SHELF.map((Item, i) => (
        <svg key={i} className="shrink-0 overflow-visible" width="94" height="108" viewBox="0 2 94 108"><Item /></svg>
      ))}
    </nav>
  );
}

export default function App() {
  return (
    <div className="h-[1964px] w-[3024px] overflow-hidden bg-[#16031a] bg-[repeating-linear-gradient(0deg,#1f0625_0,#1f0625_3px,#12020f_3px,#12020f_6px)] font-[Inter,sans-serif]">
      <MenuBar />
      <div className="flex h-[2px]">
        <span className="ml-[205px] h-px w-[110px] bg-[#3b0f6b]" />
        <span className="h-px w-[165px] bg-[#4d4850]" />
        <span className="h-px w-[112px] bg-[#33481c]" />
      </div>
      <div className="overflow-hidden rounded-b-[20px] rounded-t-[20px]">
        <div className="rounded-t-[20px] border-x-2 border-b border-t-2 border-x-[#505050] border-b-[#505050] border-t-[#686868] bg-black">
          <TabStrip />
          <Toolbar />
          <InfoBar />
        </div>
        <Page />
      </div>
      <Dock />
      <div className="flex h-[10px] flex-col">
        <div className="mt-[2px] flex h-[2px]">
          <span className="ml-[315px] w-[98px] bg-[#5c1c9c]" />
          <span className="ml-[94px] w-[100px] bg-[#6f9032]" />
        </div>
        <div className="mt-[2px] flex h-[2px]">
          <span className="ml-[507px] w-[100px] bg-[#8f8d92]" />
        </div>
      </div>
    </div>
  );
}
